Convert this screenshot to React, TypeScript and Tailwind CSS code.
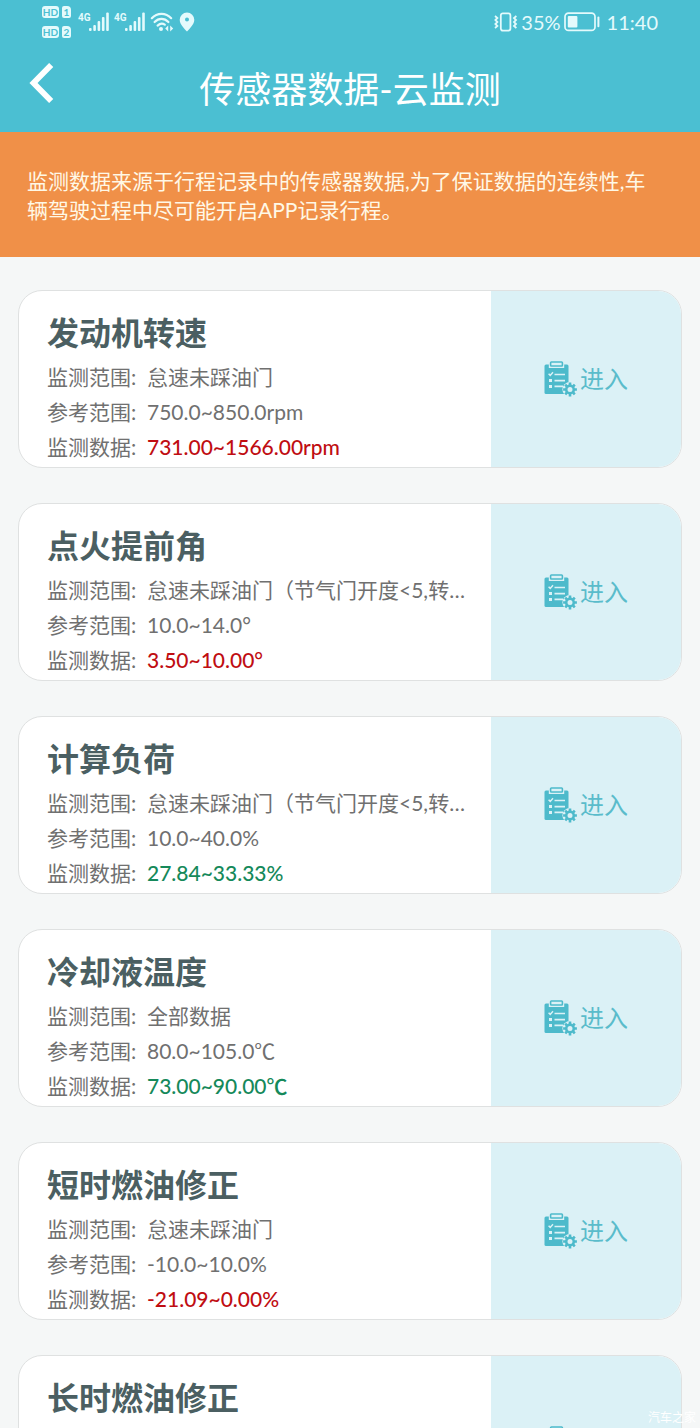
import React from 'react';

interface Sensor {
    name: string;
    rows: { label: string; value: string; tone: string }[];
}

const plain = "text-[#707070]";
const bad = "font-medium text-[#c00d12]";
const good = "font-medium text-[#15895a]";

const sensors: Sensor[] = [
    {
        name: '发动机转速',
        rows: [
            { label: '监测范围:', value: '怠速未踩油门', tone: plain },
            { label: '参考范围:', value: '750.0~850.0rpm', tone: plain },
            { label: '监测数据:', value: '731.00~1566.00rpm', tone: bad },
        ],
    },
    {
        name: '点火提前角',
        rows: [
            { label: '监测范围:', value: '怠速未踩油门（节气门开度<5,转…', tone: plain },
            { label: '参考范围:', value: '10.0~14.0°', tone: plain },
            { label: '监测数据:', value: '3.50~10.00°', tone: bad },
        ],
    },
    {
        name: '计算负荷',
        rows: [
            { label: '监测范围:', value: '怠速未踩油门（节气门开度<5,转…', tone: plain },
            { label: '参考范围:', value: '10.0~40.0%', tone: plain },
            { label: '监测数据:', value: '27.84~33.33%', tone: good },
        ],
    },
    {
        name: '冷却液温度',
        rows: [
            { label: '监测范围:', value: '全部数据', tone: plain },
            { label: '参考范围:', value: '80.0~105.0℃', tone: plain },
            { label: '监测数据:', value: '73.00~90.00℃', tone: good },
        ],
    },
    {
        name: '短时燃油修正',
        rows: [
            { label: '监测范围:', value: '怠速未踩油门', tone: plain },
            { label: '参考范围:', value: '-10.0~10.0%', tone: plain },
            { label: '监测数据:', value: '-21.09~0.00%', tone: bad },
        ],
    },
    { name: '长时燃油修正', rows: [] },
];

const HdBadge = ({ slot }: { slot: string }) => (
    <div className="flex gap-[3px] text-[10px] leading-3 font-bold text-[#4bbfd2]">
        <span className="w-[17px] h-3 rounded-[3px] bg-[#e4fafc] text-center">HD</span>
        <span className="w-[9px] h-3 rounded-[2px] rounded-tr-[4px] bg-[#e4fafc] text-center">{slot}</span>
    </div>
);

const Signal = () => (
    <div className="flex">
        <span className="w-[11px] text-[10px] leading-3 font-bold font-['Roboto']">4G</span>
        <svg width="20" height="20" viewBox="0 0 20 20" fill="currentColor">
            <rect x="0" y="16" width="2.6" height="3" rx="1" />
            <rect x="4.3" y="13" width="2.6" height="6" rx="1" />
            <rect x="8.6" y="9" width="2.6" height="10" rx="1" />
            <rect x="12.9" y="5" width="2.6" height="14" rx="1" />
            <rect x="17.2" y="0.5" width="2.6" height="18.5" rx="1" />
        </svg>
    </div>
);

const WifiIcon = () => (
    <svg width="24" height="20" viewBox="0 0 24 20" fill="none" stroke="currentColor" strokeWidth="2.2" strokeLinecap="round">
        <path d="M1.8 6.2C7.2 0.3 15.8 0.3 21.2 6.2" />
        <path d="M4.6 10C8.7 5.9 14.3 5.9 18.4 10" />
        <path d="M7.6 13.6C9.9 11.5 13 11.5 14.8 12.6" />
        <circle cx="11" cy="17" r="2" fill="currentColor" stroke="none" />
        <path d="M15.2 16.5l3-3v6zM23.2 16.5l-3-3v6z" fill="currentColor" stroke="none" />
    </svg>
);

const PinIcon = () => (
    <svg width="16" height="20" viewBox="0 0 16 20" fill="currentColor">
        <path fillRule="evenodd" d="M8 0.5a7.3 7.3 0 0 0-7.3 7.3C0.7 12.5 5.5 16.8 8 19.6c2.5-2.8 7.3-7.1 7.3-11.8A7.3 7.3 0 0 0 8 0.5zM8 5.6a2 2 0 1 1 0 4 2 2 0 0 1 0-4z" />
    </svg>
);

const VibrateIcon = () => (
    <svg width="24" height="20" viewBox="0 0 24 20" fill="none" stroke="currentColor" strokeWidth="1.8">
        <rect x="6.8" y="1.4" width="9.6" height="17.2" rx="2" />
        <path d="M1 4l2.4 2-2 2 2 2-2 2 2 2L1 16M22.4 4L20 6l2 2-2 2 2 2-2 2 2.4 2" />
    </svg>
);

const BatteryIcon = () => (
    <svg width="36" height="20" viewBox="0 0 36 20" fill="none">
        <rect x="1" y="1.2" width="30" height="17.2" rx="3.5" stroke="currentColor" strokeWidth="1.7" />
        <rect x="3.8" y="4" width="9.6" height="11.6" rx="1" fill="currentColor" />
        <path d="M34.4 5.6v8.6" stroke="currentColor" strokeWidth="2" strokeLinecap="round" />
    </svg>
);

const ClipboardGearIcon = () => (
    <svg width="34" height="36" viewBox="0 0 34 36" fill="none">
        <rect x="0.5" y="3.5" width="24" height="29.5" rx="1.5" fill="#4dbacb" />
        <rect x="4.8" y="0" width="15.4" height="7" fill="#dbf1f6" />
        <rect x="6.6" y="1" width="11.8" height="4" rx="0.8" stroke="#4dbacb" strokeWidth="1.6" />
        <path d="M10.5 13.5H21M10.5 19.6H21M10.5 25.4H19" stroke="#dbf1f6" strokeWidth="1.7" />
        <path d="M4.6 12.8l1.6 1.6 2.8-3.2" stroke="#dbf1f6" strokeWidth="1.5" />
        <path d="M5 18h3v3H5zM5 24h3v3H5z" fill="#dbf1f6" />
        <circle cx="26" cy="28.5" r="7.6" fill="#dbf1f6" />
        <g stroke="#4dbacb">
            <circle cx="26" cy="28.5" r="3.8" strokeWidth="2.6" />
            <path d="M26 21.6v2.6M26 32.8v2.6M19.1 28.5h2.6M30.3 28.5h2.6M21.2 23.7l1.8 1.8M29 31.5l1.8 1.8M21.2 33.3l1.8-1.8M29 25.5l1.8-1.8" strokeWidth="2.6" />
        </g>
    </svg>
);

const StatusBar = () => (
    <div className="flex items-start justify-between px-[42px] pt-[6px] text-[#e4fafc]">
        <div className="flex">
            <div className="flex flex-col gap-2">
                <HdBadge slot="1" />
                <HdBadge slot="2" />
            </div>
            <div className="flex gap-[5px] pt-[6px] pl-[7px]">
                <Signal />
                <Signal />
                <WifiIcon />
                <PinIcon />
            </div>
        </div>
        <div className="flex items-center gap-[3px] pt-[5px] text-[20px] leading-[22px]">
            <VibrateIcon />
            <span>35%</span>
            <BatteryIcon />
            <span className="pl-1">11:40</span>
        </div>
    </div>
);

const SensorCard = ({ sensor }: { sensor: Sensor }) => (
    <section className="flex min-h-[178px] shrink-0 overflow-hidden rounded-3xl border border-[#dfe1e1] bg-white">
        <div className="min-w-0 flex-1 pt-[22px] pl-7 pr-2">
            <h2 className="mb-[6px] text-[32px] leading-10 font-bold text-[#4b5f62]">{sensor.name}</h2>
            {sensor.rows.map(row => (
                <div key={row.label} className="flex text-[21px] leading-[35px]">
                    <span className="w-[100px] shrink-0 text-[#707070]">{row.label}</span>
                    <span className={`truncate ${row.tone}`}>{row.value}</span>
                </div>
            ))}
        </div>
        <button type="button" className="flex w-[190px] items-center justify-center gap-[2px] bg-[#dbf1f6] text-[24px] text-[#5abccb]">
            <ClipboardGearIcon />
            <span>进入</span>
        </button>
    </section>
);

export default function App() {
    return (
        <div className="relative flex h-screen flex-col overflow-hidden bg-[#f5f7f7] font-['Lato','Noto_Sans_CJK_SC',sans-serif]">
            <header className="bg-[#4bbfd2] text-white">
                <StatusBar />
                <div className="flex h-[94px] items-center px-7">
                    <button type="button" aria-label="返回" className="pb-1">
                        <svg width="26" height="40" viewBox="0 0 26 40" fill="none" stroke="currentColor" strokeWidth="5.8">
                            <path d="M23.2 2L5.5 20l17.7 18" />
                        </svg>
                    </button>
                    <h1 className="flex-1 pt-2 pr-[26px] text-center text-[36px] leading-[50px]">传感器数据-云监测</h1>
                </div>
            </header>

            <p className="bg-[#f09048] pt-[34px] pr-10 pb-[33px] pl-[27px] text-[21px] leading-[29px] text-[#fff8e6]">
                监测数据来源于行程记录中的传感器数据,为了保证数据的连续性,车辆驾驶过程中尽可能开启APP记录行程。
            </p>

            <main className="flex min-h-0 flex-1 flex-col gap-[35px] overflow-y-auto px-[18px] pt-[33px] [scrollbar-width:none]">
                {sensors.map(sensor => <SensorCard key={sensor.name} sensor={sensor} />)}
            </main>

            <span className="absolute right-1 bottom-[2px] text-[12px] leading-4 text-white">汽车之家</span>
        </div>
    );
}
